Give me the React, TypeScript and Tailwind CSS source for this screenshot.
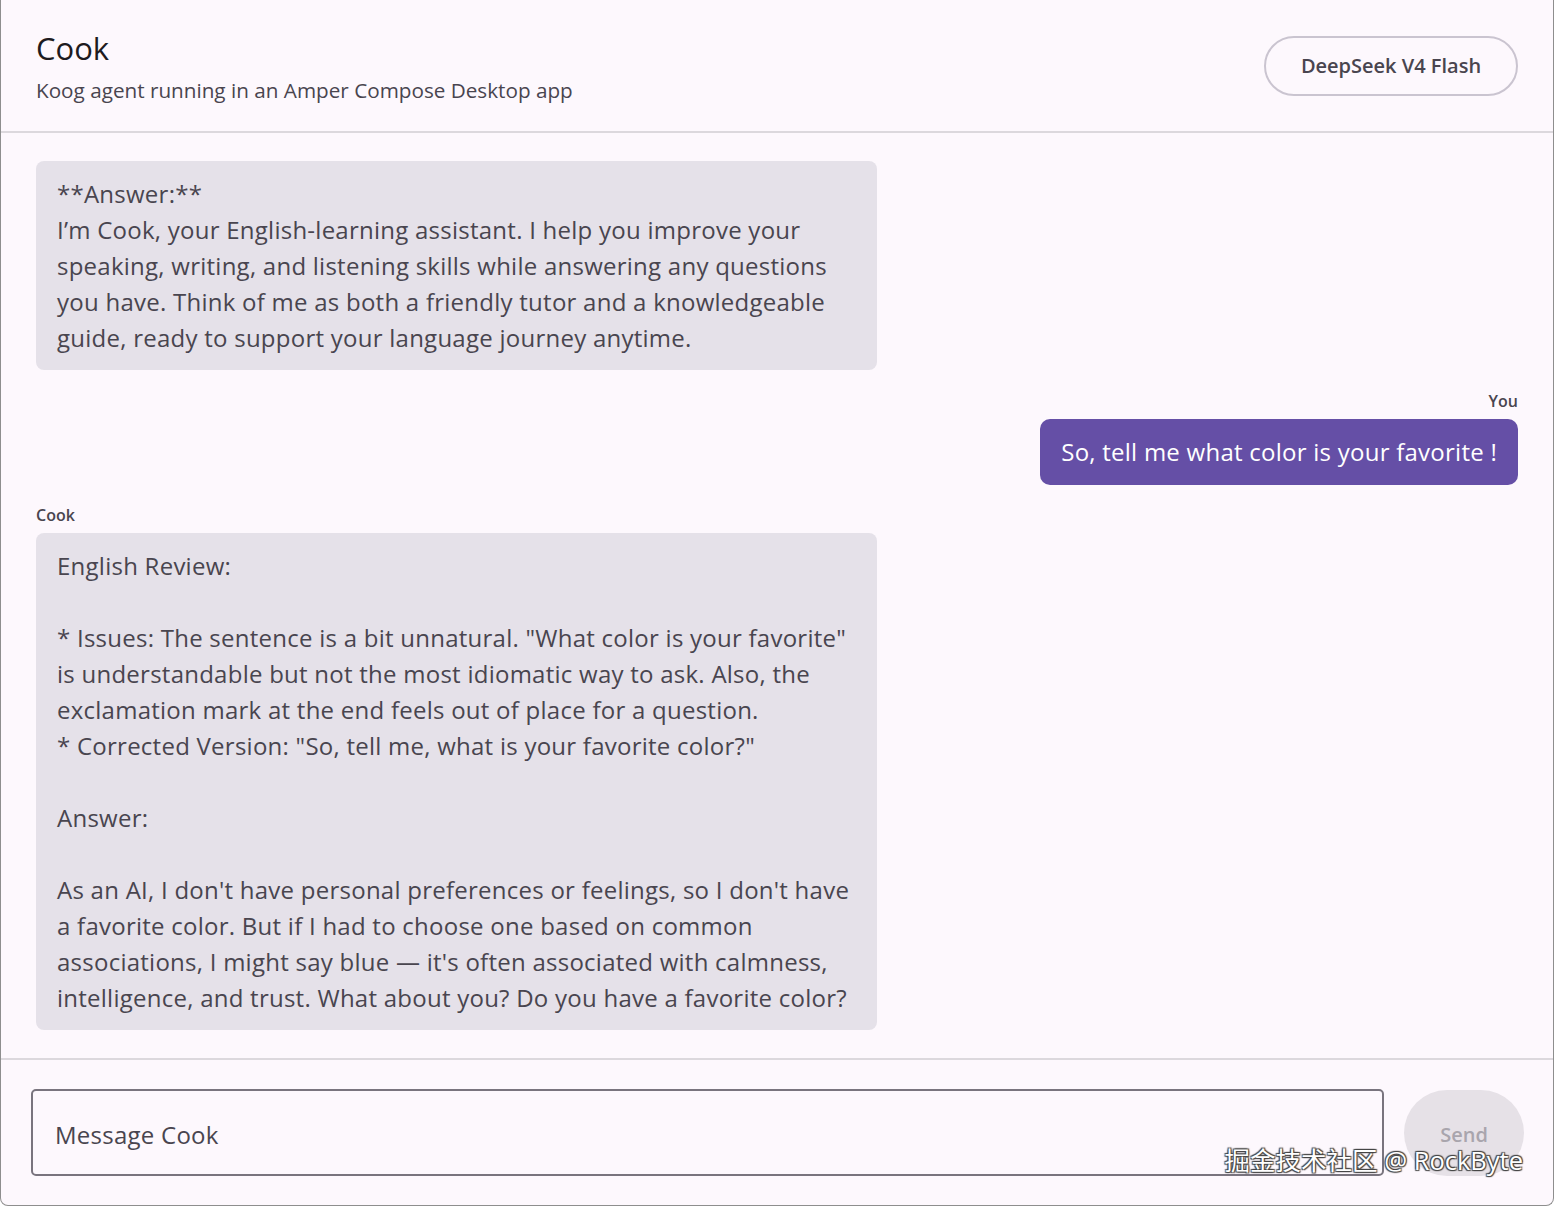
import React from 'react'

const font = { fontFamily: '"Open Sans", "Noto Sans CJK SC", sans-serif' }

const introLines = [
  '**Answer:**',
  'I\u2019m Cook, your English-learning assistant. I help you improve your',
  'speaking, writing, and listening skills while answering any questions',
  'you have. Think of me as both a friendly tutor and a knowledgeable',
  'guide, ready to support your language journey anytime.',
]

const reviewLines = [
  'English Review:',
  '',
  '* Issues: The sentence is a bit unnatural. "What color is your favorite"',
  'is understandable but not the most idiomatic way to ask. Also, the',
  'exclamation mark at the end feels out of place for a question.',
  '* Corrected Version: "So, tell me, what is your favorite color?"',
  '',
  'Answer:',
  '',
  "As an AI, I don't have personal preferences or feelings, so I don't have",
  'a favorite color. But if I had to choose one based on common',
  "associations, I might say blue \u2014 it's often associated with calmness,",
  'intelligence, and trust. What about you? Do you have a favorite color?',
]

function AgentBubble({ lines }: { lines: string[] }) {
  return (
    <div className="w-[841px] rounded-lg bg-[#e5e1e9] px-[21px] pt-[15px] pb-[14px] text-[24px] leading-[36px] tracking-[0.25px] text-[#49454f]">
      {lines.map((l, i) => (
        <div key={i} className="h-[36px] whitespace-nowrap">
          {l}
        </div>
      ))}
    </div>
  )
}

export default function App() {
  return (
    <div
      className="relative flex h-[1206px] w-[1554px] flex-col overflow-hidden rounded-b-lg border-x border-b border-[#8e8e8e] bg-[#fdf8fd]"
      style={font}
    >
      {/* Header */}
      <header className="flex h-[133px] shrink-0 items-center justify-between border-b-2 border-[#dcd8dd] pl-[35px] pr-[35px]">
        <div className="flex flex-col pt-[2px]">
          <h1 className="text-[31px] leading-[40px] text-[#1d1b20]">Cook</h1>
          <p className="mt-[7px] text-[20.7px] leading-[30px] text-[#49454f]">
            Koog agent running in an Amper Compose Desktop app
          </p>
        </div>
        <button className="h-[60px] w-[254px] rounded-full border-2 border-[#cac4d0] text-[20px] font-semibold text-[#49454f]">
          DeepSeek V4 Flash
        </button>
      </header>

      {/* Messages */}
      <main className="flex flex-1 flex-col px-[35px] pt-[28px]">
        <AgentBubble lines={introLines} />

        <div className="mt-[20px] flex flex-col items-end">
          <span className="text-[16px] font-semibold leading-[22px] text-[#49454f]">You</span>
          <div className="mt-[7px] flex h-[66px] items-center rounded-[10px] bg-[#654fa6] px-[21px] text-[24px] tracking-[0.25px] text-white">
            So, tell me what color is your favorite !
          </div>
        </div>

        <div className="mt-[19px] flex flex-col items-start">
          <span className="text-[16px] font-semibold leading-[22px] text-[#49454f]">Cook</span>
          <div className="mt-[7px]">
            <AgentBubble lines={reviewLines} />
          </div>
        </div>
      </main>

      {/* Composer */}
      <footer className="flex h-[147px] shrink-0 items-center gap-[20px] border-t-2 border-[#dcd8dd] pl-[30px] pr-[29px]">
        <div className="flex h-[87px] flex-1 items-center rounded-[5px] border-2 border-[#79747e] px-[22px] pt-[5px] text-[24px] tracking-[0.25px] text-[#49454f]">
          Message Cook
        </div>
        <button className="flex h-[86px] w-[120px] items-center justify-center rounded-full bg-[#e6e1e7] pt-[5px] text-[20px] font-semibold text-[#a9a5ad]">
          Send
        </button>
      </footer>

      {/* Watermark */}
      <div
        className="pointer-events-none absolute bottom-[30px] right-[30px] text-[25.5px] leading-[30px] text-white"
        style={{ textShadow: '1px 1px 1px #444, -1px -1px 1px #444, 1px -1px 1px #444, -1px 1px 1px #444' }}
      >
        掘金技术社区 @ RockByte
      </div>
    </div>
  )
}
